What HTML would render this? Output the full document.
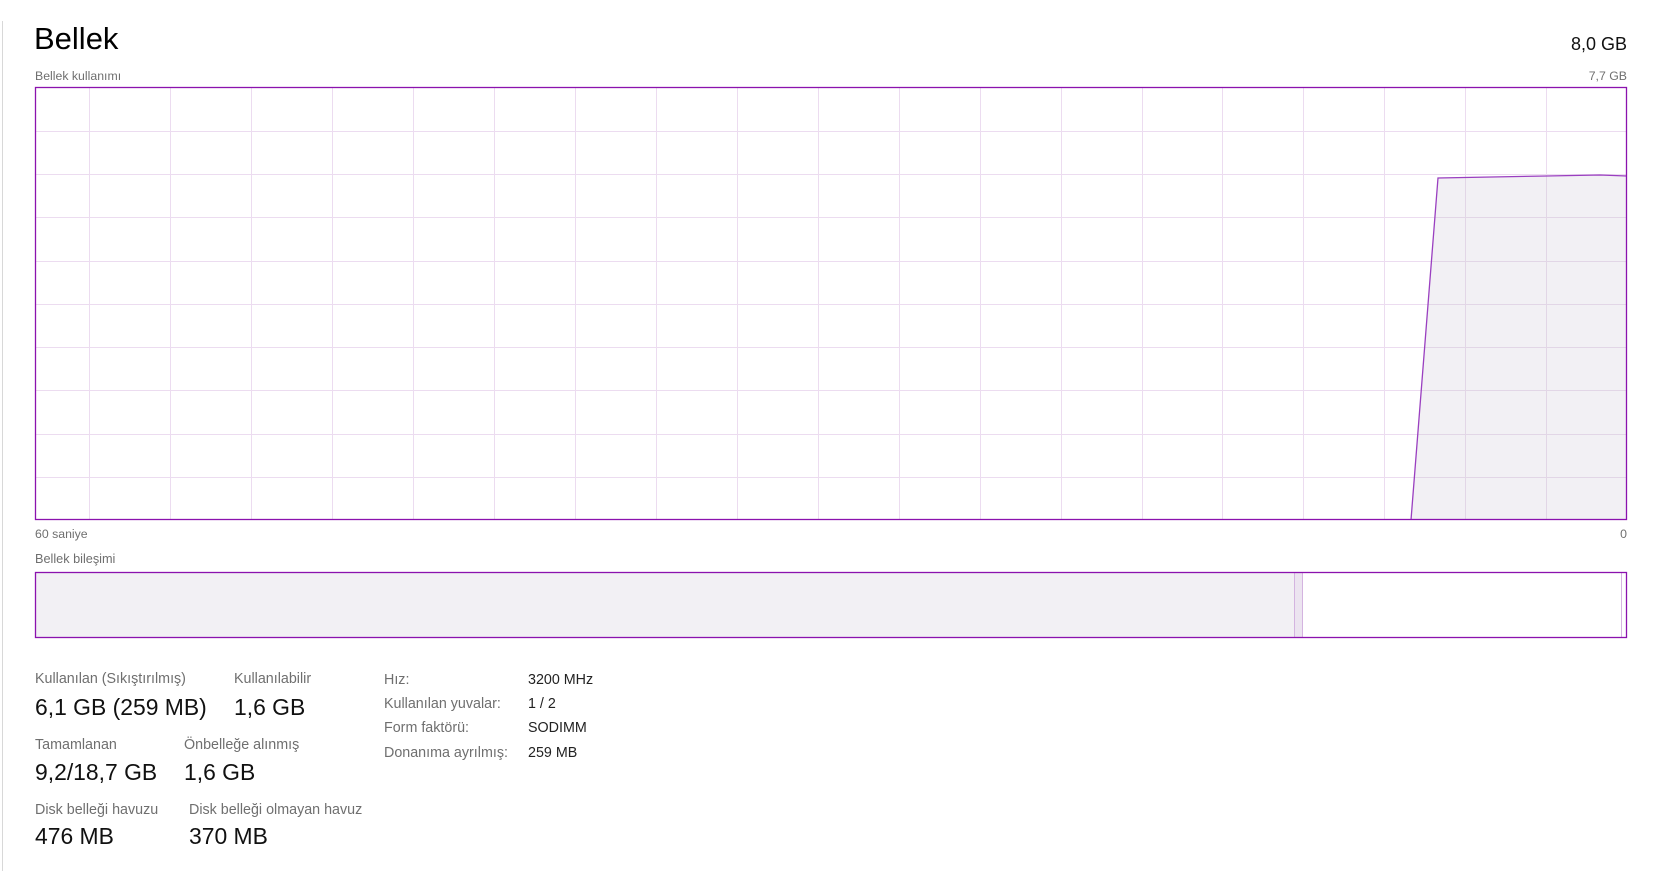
<!DOCTYPE html>
<html><head><meta charset="utf-8"><style>
body{margin:0;width:1655px;height:871px;background:#fff;position:relative;overflow:hidden;font-family:"Liberation Sans",sans-serif;}
.a{position:absolute;white-space:nowrap;line-height:1;}
.lb{color:#6f6f6f;font-size:14.3px;}
.v{color:#111;font-size:22.9px;}
.s{color:#6f6f6f;font-size:12.3px;}
.r{color:#222;font-size:14.3px;}
</style></head><body>
<div class="a" style="left:2px;top:21px;width:1px;height:850px;background:#d8d8d8"></div>
<div class="a" style="left:34px;top:23px;font-size:31px;color:#000">Bellek</div>
<div class="a" style="right:28px;top:35px;font-size:18px;color:#111">8,0 GB</div>
<div class="a s" style="left:35px;top:70px">Bellek kullanımı</div>
<div class="a s" style="right:28px;top:70px">7,7 GB</div>
<svg class="a" style="left:0;top:0" width="1655" height="871">
<g stroke="#ecdcf0" stroke-width="1">
<line x1="89.5" y1="88" x2="89.5" y2="520"/><line x1="170.5" y1="88" x2="170.5" y2="520"/><line x1="251.5" y1="88" x2="251.5" y2="520"/><line x1="332.5" y1="88" x2="332.5" y2="520"/><line x1="413.5" y1="88" x2="413.5" y2="520"/><line x1="494.5" y1="88" x2="494.5" y2="520"/><line x1="575.5" y1="88" x2="575.5" y2="520"/><line x1="656.5" y1="88" x2="656.5" y2="520"/><line x1="737.5" y1="88" x2="737.5" y2="520"/><line x1="818.5" y1="88" x2="818.5" y2="520"/><line x1="899.5" y1="88" x2="899.5" y2="520"/><line x1="980.5" y1="88" x2="980.5" y2="520"/><line x1="1061.5" y1="88" x2="1061.5" y2="520"/><line x1="1142.5" y1="88" x2="1142.5" y2="520"/><line x1="1222.5" y1="88" x2="1222.5" y2="520"/><line x1="1303.5" y1="88" x2="1303.5" y2="520"/><line x1="1384.5" y1="88" x2="1384.5" y2="520"/><line x1="1465.5" y1="88" x2="1465.5" y2="520"/><line x1="1546.5" y1="88" x2="1546.5" y2="520"/>
<line x1="36" y1="131.5" x2="1626" y2="131.5"/><line x1="36" y1="174.5" x2="1626" y2="174.5"/><line x1="36" y1="217.5" x2="1626" y2="217.5"/><line x1="36" y1="261.5" x2="1626" y2="261.5"/><line x1="36" y1="304.5" x2="1626" y2="304.5"/><line x1="36" y1="347.5" x2="1626" y2="347.5"/><line x1="36" y1="390.5" x2="1626" y2="390.5"/><line x1="36" y1="434.5" x2="1626" y2="434.5"/><line x1="36" y1="477.5" x2="1626" y2="477.5"/>
</g>
<path d="M1411 520 L1438 178 L1546 176 L1600 175 L1627 176 L1627 520 Z" fill="#f2f0f4"/>
<g stroke="#e2d6e6"><line x1="1465.5" y1="178" x2="1465.5" y2="519"/><line x1="1546.5" y1="176" x2="1546.5" y2="519"/><line x1="1435" y1="217.5" x2="1626" y2="217.5"/><line x1="1432" y1="261.5" x2="1626" y2="261.5"/><line x1="1428" y1="304.5" x2="1626" y2="304.5"/><line x1="1425" y1="347.5" x2="1626" y2="347.5"/><line x1="1421" y1="390.5" x2="1626" y2="390.5"/><line x1="1418" y1="434.5" x2="1626" y2="434.5"/><line x1="1414" y1="477.5" x2="1626" y2="477.5"/></g>
<path d="M1411 520 L1438 178 L1546 176 L1600 175 L1627 176" fill="none" stroke="#9a3fc0" stroke-width="1.3"/>
<rect x="35.5" y="87.5" width="1591" height="432" fill="none" stroke="#8b12ae" stroke-width="1.3"/>
<rect x="36" y="573" width="1258" height="64" fill="#f2f0f4"/>
<rect x="1294" y="573" width="8" height="64" fill="#ece4f0"/>
<line x1="1294.5" y1="573" x2="1294.5" y2="637" stroke="#d4b4e0"/>
<line x1="1302.5" y1="573" x2="1302.5" y2="637" stroke="#d4b4e0"/>
<line x1="1621.5" y1="573" x2="1621.5" y2="637" stroke="#d4b4e0"/>
<rect x="35.5" y="572.5" width="1591" height="65" fill="none" stroke="#8b12ae" stroke-width="1.3"/>
</svg>
<div class="a s" style="left:35px;top:528px">60 saniye</div>
<div class="a s" style="right:28px;top:528px">0</div>
<div class="a s" style="left:35px;top:553px;font-size:12.7px">Bellek bileşimi</div>
<div class="a lb" style="left:35px;top:672px">Kullanılan (Sıkıştırılmış)</div>
<div class="a v" style="left:35px;top:696px">6,1 GB (259 MB)</div>
<div class="a lb" style="left:234px;top:672px">Kullanılabilir</div>
<div class="a v" style="left:234px;top:696px">1,6 GB</div>
<div class="a lb" style="left:35px;top:738px">Tamamlanan</div>
<div class="a v" style="left:35px;top:761px">9,2/18,7 GB</div>
<div class="a lb" style="left:184px;top:738px">Önbelleğe alınmış</div>
<div class="a v" style="left:184px;top:761px">1,6 GB</div>
<div class="a lb" style="left:35px;top:803px">Disk belleği havuzu</div>
<div class="a v" style="left:35px;top:825px">476 MB</div>
<div class="a lb" style="left:189px;top:803px">Disk belleği olmayan havuz</div>
<div class="a v" style="left:189px;top:825px">370 MB</div>
<div class="a lb" style="left:384px;top:673px">Hız:</div>
<div class="a lb" style="left:384px;top:697px">Kullanılan yuvalar:</div>
<div class="a lb" style="left:384px;top:721px">Form faktörü:</div>
<div class="a lb" style="left:384px;top:746px">Donanıma ayrılmış:</div>
<div class="a r" style="left:528px;top:673px">3200 MHz</div>
<div class="a r" style="left:528px;top:697px">1 / 2</div>
<div class="a r" style="left:528px;top:721px">SODIMM</div>
<div class="a r" style="left:528px;top:746px">259 MB</div>
</body></html>
